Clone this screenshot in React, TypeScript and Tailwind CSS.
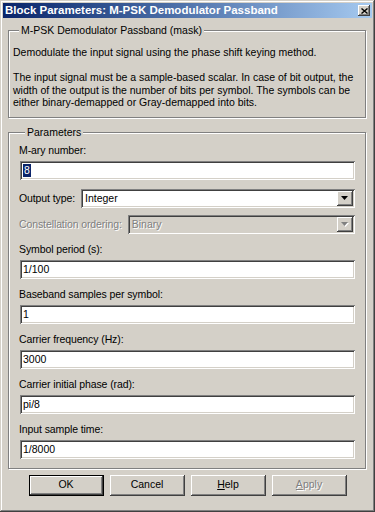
import React from "react";

const raised =
  "shadow-[inset_-1px_-1px_#404040,inset_1px_1px_#ffffff,inset_-2px_-2px_#808080,inset_2px_2px_#d4d0c8]";
const sunken =
  "shadow-[inset_1px_1px_#808080,inset_-1px_-1px_#ffffff,inset_2px_2px_#404040,inset_-2px_-2px_#d4d0c8]";
const etched = "border border-[#808080] shadow-[inset_1px_1px_#ffffff,1px_1px_#ffffff]";
const embossed = "text-[#808080] [text-shadow:1px_1px_#ffffff]";

const ArrowButton = ({ disabled }: { disabled?: boolean }) => (
  <div className={`flex h-[15px] w-[16px] items-center justify-center bg-[#d4d0c8] ${raised}`}>
    <svg width="8" height="5" viewBox="0 0 8 5">
      {disabled && <polygon points="1,1 8,1 4.5,5" fill="#ffffff" />}
      <polygon points="0,0 7,0 3.5,4" fill={disabled ? "#808080" : "#000000"} />
    </svg>
  </div>
);

const TextField = ({ value, selected }: { value: string; selected?: boolean }) => (
  <div className={`ml-[1px] flex h-[19px] items-center bg-white pl-[3px] ${sunken}`}>
    {selected ? (
      <span className="bg-[#0a246a] px-[1px] leading-[13px] text-white">{value}</span>
    ) : (
      <span className="leading-[13px]">{value}</span>
    )}
  </div>
);

const Combo = ({ value, disabled }: { value: string; disabled?: boolean }) => (
  <div
    className={`flex h-[19px] flex-1 items-center p-[2px] ${sunken} ${
      disabled ? "bg-[#d4d0c8]" : "bg-white"
    }`}
  >
    <span className={`flex-1 pl-[2px] leading-[13px] ${disabled ? embossed : ""}`}>{value}</span>
    <ArrowButton disabled={disabled} />
  </div>
);

const Field = ({ label, value, selected }: { label: string; value: string; selected?: boolean }) => (
  <div className="flex flex-col gap-[4px]">
    <div className="leading-[13px] tracking-[-0.1px]">{label}</div>
    <TextField value={value} selected={selected} />
  </div>
);

const Button = ({
  children,
  isDefault,
  disabled,
}: {
  children: React.ReactNode;
  isDefault?: boolean;
  disabled?: boolean;
}) => (
  <div
    className={`flex h-[21px] w-[75px] items-center justify-center bg-[#d4d0c8] ${
      isDefault ? "border border-black" : ""
    } ${raised} ${disabled ? embossed : ""}`}
  >
    {children}
  </div>
);

export default function App() {
  return (
    <div
      className={`flex h-[512px] w-[375px] flex-col bg-[#d4d0c8] p-[3px] font-['Liberation_Sans',Arial,sans-serif] text-[10.5px] text-black shadow-[inset_-1px_-1px_#404040,inset_1px_1px_#d4d0c8,inset_-2px_-2px_#808080,inset_2px_2px_#ffffff]`}
    >
      <div className="flex h-[15px] items-center justify-between bg-linear-to-r from-[#0a246a] to-[#a6caf0] pl-[2px] pr-[2px]">
        <span className="text-[11.5px] font-bold leading-[15px] text-white">
          Block Parameters: M-PSK Demodulator Passband
        </span>
        <div className={`flex h-[11px] w-[12px] items-center justify-center bg-[#d4d0c8] ${raised}`}>
          <svg width="7" height="6" viewBox="0 0 7 6">
            <path d="M0.5 0.5 L6.5 5.5 M6.5 0.5 L0.5 5.5" stroke="#000" strokeWidth="1.4" />
          </svg>
        </div>
      </div>

      <fieldset className={`ml-[5px] mr-[6px] mt-[6px] pb-[8px] pl-[4px] pt-[9px] ${etched}`}>
        <legend className="ml-[6px] bg-[#d4d0c8] px-[2px] leading-[13px]">
          M-PSK Demodulator Passband (mask)
        </legend>
        <div className="whitespace-nowrap leading-[12.5px]">
          Demodulate the input signal using the phase shift keying method.
          <br />
          <br />
          The input signal must be a sample-based scalar. In case of bit output, the
          <br />
          width of the output is the number of bits per symbol. The symbols can be
          <br />
          either binary-demapped or Gray-demapped into bits.
        </div>
      </fieldset>

      <fieldset className={`ml-[5px] mr-[6px] mt-[8px] pb-[9px] pl-[10px] pr-[10px] pt-[5px] ${etched}`}>
        <legend className="ml-[6px] bg-[#d4d0c8] px-[2px] leading-[13px]">Parameters</legend>
        <div className="flex flex-col">
          <Field label="M-ary number:" value="8" selected />
          <div className="mt-[9px] flex items-center gap-[6px]">
            <span className="leading-[13px] tracking-[-0.1px]">Output type:</span>
            <Combo value="Integer" />
          </div>
          <div className="mt-[7px] flex items-center gap-[6px]">
            <span className={`leading-[13px] tracking-[-0.1px] ${embossed}`}>Constellation ordering:</span>
            <Combo value="Binary" disabled />
          </div>
          <div className="mt-[9px] flex flex-col gap-[9px]">
            <Field label="Symbol period (s):" value="1/100" />
            <Field label="Baseband samples per symbol:" value="1" />
            <Field label="Carrier frequency (Hz):" value="3000" />
            <Field label="Carrier initial phase (rad):" value="pi/8" />
            <Field label="Input sample time:" value="1/8000" />
          </div>
        </div>
      </fieldset>

      <div className="mt-[6px] flex justify-center gap-[6px]">
        <Button isDefault>OK</Button>
        <Button>Cancel</Button>
        <Button>
          <span>
            <span className="underline">H</span>elp
          </span>
        </Button>
        <Button disabled>
          <span>
            <span className="underline">A</span>pply
          </span>
        </Button>
      </div>
    </div>
  );
}
